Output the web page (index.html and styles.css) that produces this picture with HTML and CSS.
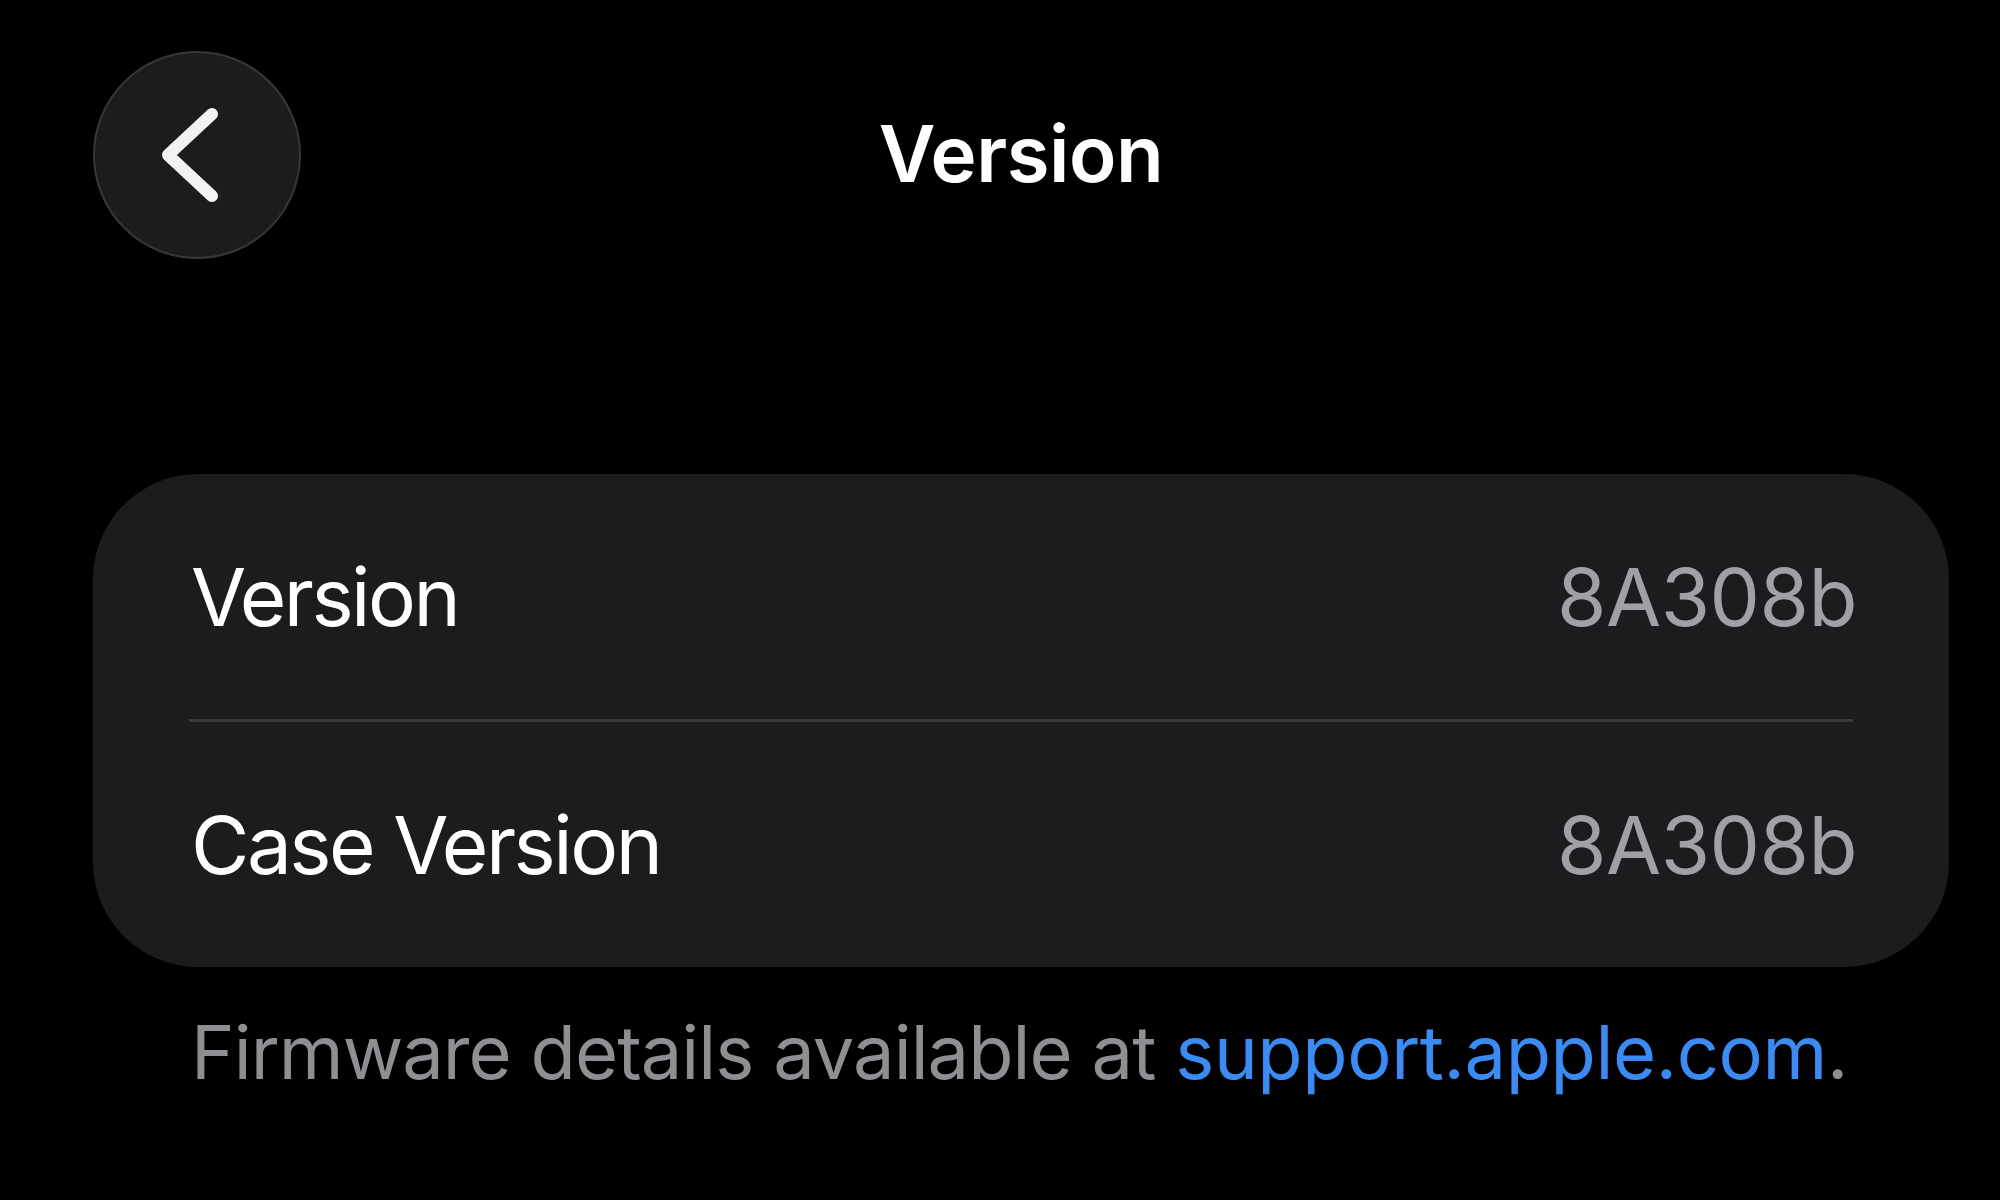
FILE: index.html
```html
<!DOCTYPE html>
<html>
<head>
<meta charset="utf-8">
<link rel="stylesheet" href="styles.css">
</head>
<body>
<div class="page">
  <header class="nav">
    <button class="back" aria-label="Back">
      <svg width="208" height="208" viewBox="0 0 208 208">
        <path d="M119 63 L75 104 L119 145" fill="none" stroke="#f2f2f2" stroke-width="12" stroke-linecap="round" stroke-linejoin="round"/>
      </svg>
    </button>
    <h1 class="title">Version</h1>
    <div class="spacer"></div>
  </header>
  <section class="card">
    <div class="row"><span class="label">Version</span><span class="value">8A308b</span></div>
    <div class="divider"></div>
    <div class="row"><span class="label">Case Version</span><span class="value">8A308b</span></div>
  </section>
  <p class="footer">Firmware details available at <span class="link">support.apple.com</span>.</p>
</div>
</body>
</html>
```
FILE: styles.css
```css
html, body {
  margin: 0;
  padding: 0;
  background: #000;
}
body {
  width: 2000px;
  height: 1200px;
  overflow: hidden;
  font-family: "Inter", "Liberation Sans", sans-serif;
  color: #fff;
}
.page {
  padding: 51px 51px 0 93px;
}
.nav {
  display: grid;
  grid-template-columns: 208px 1fr 208px;
  align-items: center;
  height: 208px;
}
.back {
  width: 208px;
  height: 208px;
  border-radius: 50%;
  background: #1c1c1e;
  border: 2px solid #37373a;
  padding: 0;
  margin: 0;
  box-sizing: border-box;
  display: flex;
  align-items: center;
  justify-content: center;
}
.back svg {
  display: block;
  flex: none;
}
.title {
  margin: 0 0 4px 0;
  text-align: center;
  font-size: 78px;
  font-weight: 600;
  letter-spacing: -0.5px;
  color: #fff;
}
.card {
  margin-top: 215px;
  background: #1c1c1e;
  border-radius: 105px;
  display: flex;
  flex-direction: column;
}
.row {
  height: 245px;
  display: flex;
  align-items: center;
  justify-content: space-between;
  padding: 0 92px 0 98px;
}
.label {
  font-size: 80px;
  font-weight: 400;
  color: #fff;
  letter-spacing: -2.5px;
}
.value {
  font-size: 80px;
  font-weight: 400;
  color: #a0a0a7;
  letter-spacing: -0.5px;
}
.divider {
  height: 3px;
  background: #3a3a3d;
  margin: 0 96px;
}
.footer {
  margin: 40px 0 0 98px;
  font-size: 74px;
  color: #8e8e93;
  letter-spacing: -0.95px;
}
.link {
  color: #3a8bf4;
  letter-spacing: -0.4px;
}
```
